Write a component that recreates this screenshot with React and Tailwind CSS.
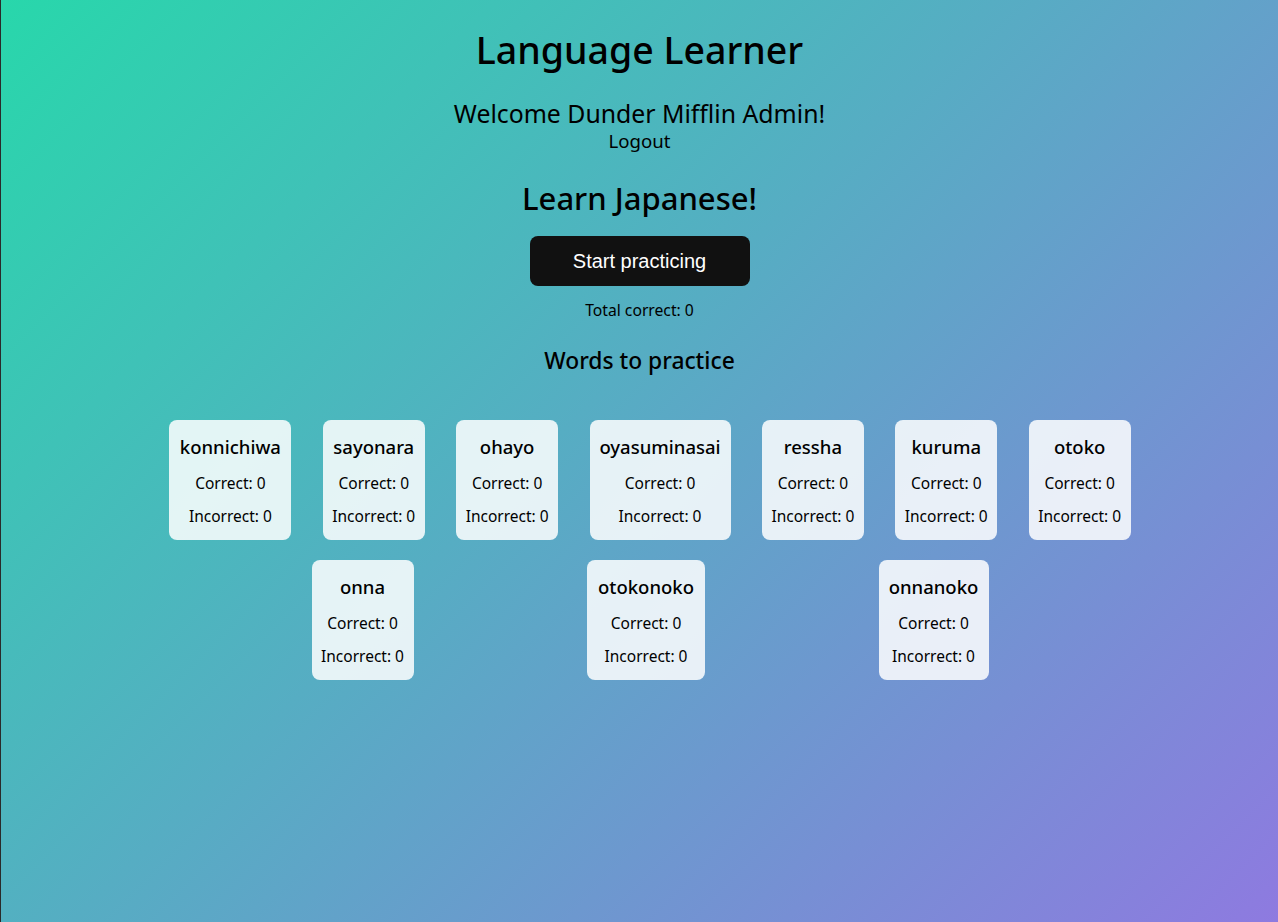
const words = [
  { word: "konnichiwa", w: "w-[122px]" },
  { word: "sayonara", w: "w-[102px]" },
  { word: "ohayo", w: "w-[102px]" },
  { word: "oyasuminasai", w: "w-[141px]" },
  { word: "ressha", w: "w-[102px]" },
  { word: "kuruma", w: "w-[102px]" },
  { word: "otoko", w: "w-[102px]" },
  { word: "onna", w: "w-[102px]" },
  { word: "otokonoko", w: "w-[118px]" },
  { word: "onnanoko", w: "w-[110px]" },
];

function WordCard({ word, w }) {
  return (
    <div className={`${w} mx-[12px] rounded-lg bg-white/85 px-[4px] py-[15px] flex flex-col items-center gap-[15px] text-center`}>
      <div className="text-[18.5px] leading-[24px] font-medium whitespace-nowrap">{word}</div>
      <div className="text-[15.5px] leading-[18px] whitespace-nowrap">Correct: 0</div>
      <div className="text-[15.5px] leading-[18px] whitespace-nowrap">Incorrect: 0</div>
    </div>
  );
}

export default function App() {
  return (
    <div
      className="min-h-screen w-full border-l border-[#2a2a2a] bg-[linear-gradient(135deg,#28d7ab,#8e7ae0)] text-black flex flex-col items-center"
      style={{ fontFamily: '"Noto Sans", "Open Sans", sans-serif' }}
    >
      <h1 className="mt-[27px] text-[37.5px] leading-[46px] font-medium">Language Learner</h1>
      <p className="mt-[26px] text-[24.8px] leading-[28px]">Welcome Dunder Mifflin Admin!</p>
      <button className="mt-[3px] text-[18.6px] leading-[22px]">Logout</button>
      <h2 className="mt-[28px] text-[31px] leading-[36px] font-medium">Learn Japanese!</h2>
      <button
        className="mt-[20px] w-[220px] h-[50px] rounded-lg bg-[#111111] text-white text-[20px]"
        style={{ fontFamily: '"Liberation Sans", Arial, sans-serif' }}
      >
        Start practicing
      </button>
      <p className="mt-[15px] text-[15.7px] leading-[18px]">Total correct: 0</p>
      <h3 className="mt-[28px] text-[22.8px] leading-[28px] font-medium">Words to practice</h3>
      <div className="mt-[45px] w-[1023px] pl-[22px] pr-[1px]">
        <div className="flex flex-wrap justify-evenly gap-y-[20px]">
          {words.map((item) => (
            <WordCard key={item.word} {...item} />
          ))}
        </div>
      </div>
    </div>
  );
}
